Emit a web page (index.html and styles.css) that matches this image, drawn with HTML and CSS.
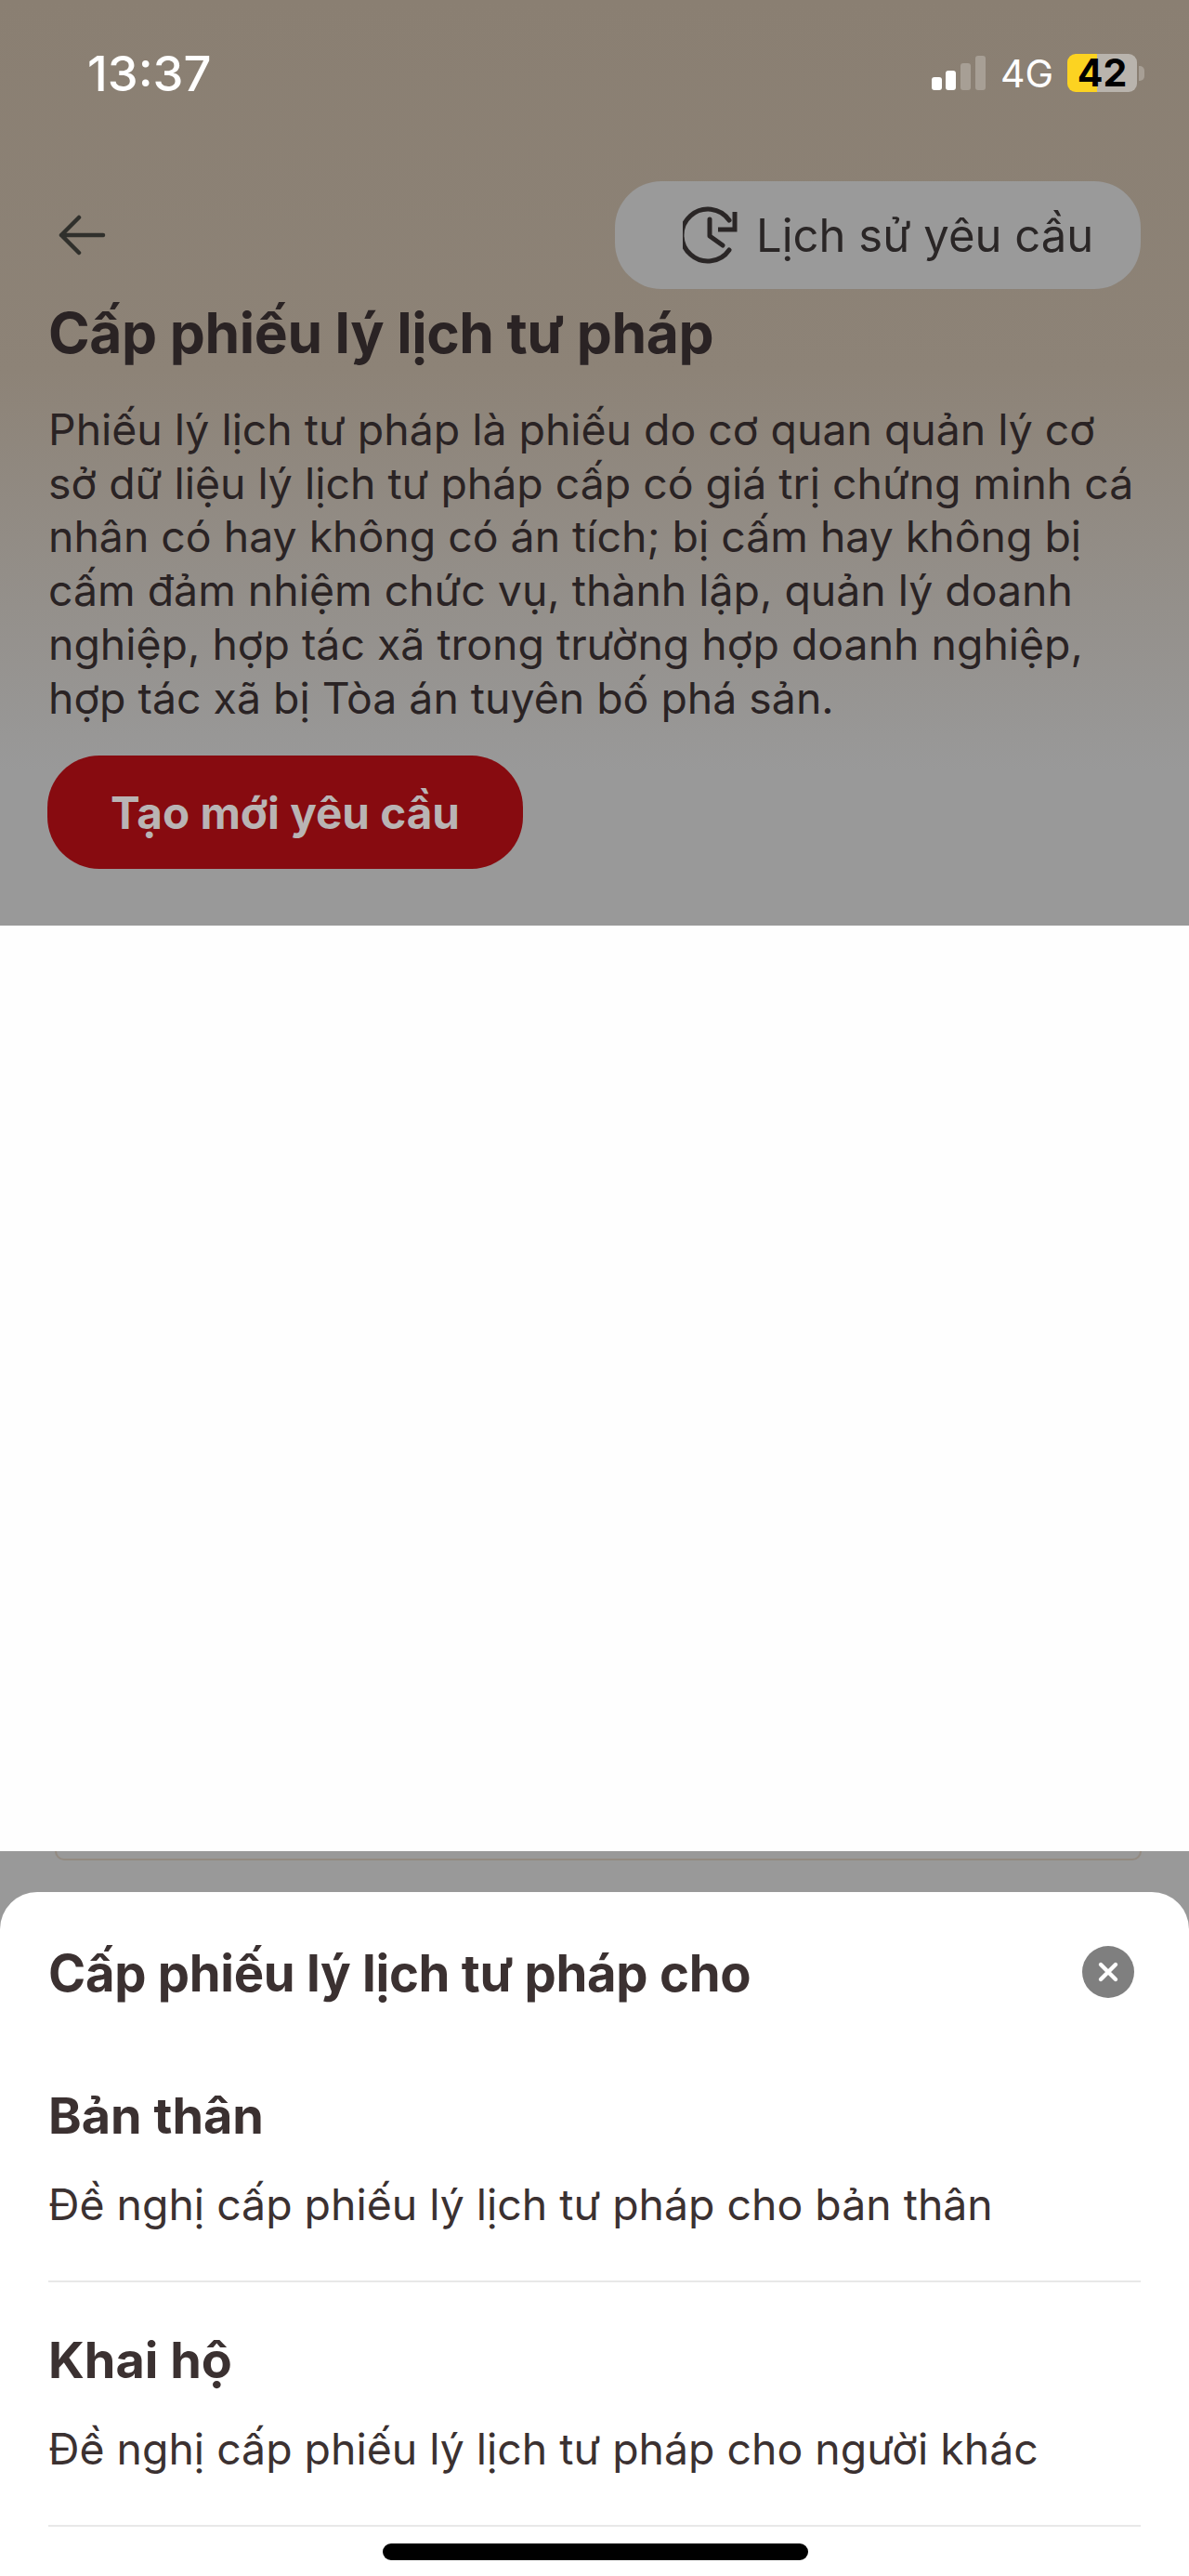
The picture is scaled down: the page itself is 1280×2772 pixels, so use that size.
FILE: index.html
```html
<!DOCTYPE html>
<html lang="vi">
<head>
<meta charset="utf-8">
<title>Cấp phiếu lý lịch tư pháp</title>
<link rel="stylesheet" href="styles.css">
</head>
<body>
<div class="screen">
  <section class="top">
    <div class="status">
      <span class="time">13:37</span>
      <div class="status-right">
        <svg class="signal" width="58" height="37" viewBox="0 0 58 37"><rect x="0" y="23" width="11" height="14" rx="3" fill="#fff"/><rect x="15" y="16" width="11" height="21" rx="3" fill="#fff"/><rect x="31" y="8" width="11" height="29" rx="3" fill="#a79f95"/><rect x="47" y="0" width="11" height="37" rx="3" fill="#a79f95"/></svg>
        <span class="net">4G</span>
        <div class="battery"><span class="battery-level">42</span></div>
        <span class="battery-cap"></span>
      </div>
    </div>
    <div class="nav">
      <svg class="back" width="52" height="44" viewBox="0 0 52 44"><path d="M48 22H3M22 3 3 22l19 19" fill="none" stroke="#30302c" stroke-width="4.5" stroke-linecap="round" stroke-linejoin="round"/></svg>
      <button class="history">
        <svg class="clock" width="64" height="62" viewBox="0 0 64 62"><path d="M50 47A28 28 0 1 1 50 15" fill="none" stroke="#2a2626" stroke-width="5" stroke-linecap="round"/><path d="M56 6v19H38" fill="none" stroke="#2a2626" stroke-width="5" stroke-linejoin="miter" stroke-linecap="butt"/><path d="M29 14v18l14 10" fill="none" stroke="#2a2626" stroke-width="5" stroke-linecap="round" stroke-linejoin="round"/></svg>
        <span>Lịch sử yêu cầu</span>
      </button>
    </div>
    <h1 class="title">Cấp phiếu lý lịch tư pháp</h1>
    <p class="desc">Phiếu lý lịch tư pháp là phiếu do cơ quan quản lý cơ<br>sở dữ liệu lý lịch tư pháp cấp có giá trị chứng minh cá<br>nhân có hay không có án tích; bị cấm hay không bị<br>cấm đảm nhiệm chức vụ, thành lập, quản lý doanh<br>nghiệp, hợp tác xã trong trường hợp doanh nghiệp,<br>hợp tác xã bị Tòa án tuyên bố phá sản.</p>
    <button class="create">Tạo mới yêu cầu</button>
  </section>
  <section class="blank"></section>
  <section class="under"><div class="under-card"></div></section>
  <section class="sheet">
    <header class="sheet-head">
      <h2 class="sheet-title">Cấp phiếu lý lịch tư pháp cho</h2>
      <span class="close"><svg width="24" height="24" viewBox="0 0 24 24"><path d="M4 4l16 16M20 4 4 20" stroke="#fff" stroke-width="4.4" stroke-linecap="round"/></svg></span>
    </header>
    <div class="option">
      <h3 class="option-title">Bản thân</h3>
      <p class="option-desc">Đề nghị cấp phiếu lý lịch tư pháp cho bản thân</p>
    </div>
    <div class="option">
      <h3 class="option-title">Khai hộ</h3>
      <p class="option-desc">Đề nghị cấp phiếu lý lịch tư pháp cho người khác</p>
    </div>
  </section>
  <div class="home-bar"></div>
</div>
</body>
</html>
```
FILE: styles.css
```css
* { box-sizing: border-box; }
html, body { margin: 0; padding: 0; }
body { font-family: Inter, "Liberation Sans", sans-serif; background: #fff; }
.screen { position: relative; width: 1280px; height: 2772px; overflow: hidden; background: #999; display: flex; flex-direction: column; }

.top { height: 996px; padding: 0 52px; background: linear-gradient(180deg, #8a7f72 0, #8d8377 400px, #999 830px, #999 100%); flex: none; }
.status { height: 156px; margin: 0 -4px 0 42px; padding-top: 50px; display: flex; justify-content: space-between; align-items: flex-start; }
.time { color: #fff; font-size: 52.5px; font-weight: 500; line-height: 58px; }
.status-right { display: flex; align-items: center; margin-top: 8px; }
.signal { margin-right: 16px; }
.net { color: #fff; font-size: 41px; font-weight: 400; line-height: 40px; margin-right: 15px; }
.battery { width: 75px; height: 41px; border-radius: 9px; background: linear-gradient(90deg, #fcd321 0, #fcd321 42%, #b9b4ad 42%); display: flex; align-items: center; justify-content: center; }
.battery-level { color: #000; font-size: 41px; font-weight: 700; line-height: 41px; }
.battery-cap { width: 6px; height: 16px; margin-left: 2px; border-radius: 0 5px 5px 0; background: #a79f95; }

.nav { height: 116px; margin-top: 39px; display: flex; justify-content: space-between; align-items: center; }
.back { margin-left: 11px; }
.history { width: 566px; height: 116px; border: 0; border-radius: 50px; background: #9a9a9a; display: flex; align-items: center; gap: 15px; padding: 0 0 0 73px; font: inherit; font-size: 49px; color: #2a2626; }
.title { margin: 13px 0 0; font-size: 60.5px; font-weight: 700; line-height: 68px; color: #2a2324; letter-spacing: -0.4px; }
.desc { margin: 42px 0 0; font-size: 46.4px; line-height: 57.7px; color: #2a2324; white-space: nowrap; }
.create { display: block; width: 512px; height: 122px; margin: 33px 0 0 -1px; border: 0; border-radius: 56px; background: #870b10; color: #b9b4b4; font: inherit; font-size: 47.6px; font-weight: 700; }

.blank { height: 996px; background: #fefefe; flex: none; }
.under { height: 44px; flex: none; background: #999; padding: 0 51px 0 59px; }
.under-card { height: 10px; border: 2px solid #938a80; border-top: 0; border-radius: 0 0 24px 24px; }

.sheet { flex: 1; background: #fff; border-radius: 40px 40px 0 0; padding: 0 52px; }
.sheet-head { height: 157px; padding-top: 56px; display: flex; justify-content: space-between; align-items: flex-start; }
.sheet-title { margin: 0; font-size: 54.4px; font-weight: 700; line-height: 62px; color: #3b3131; letter-spacing: -0.3px; }
.close { width: 56px; height: 56px; margin: 2px 7px 0 0; border-radius: 50%; background: #7f7f7f; display: flex; align-items: center; justify-content: center; }
.option { height: 263px; border-bottom: 2px solid #e8e8e8; padding-top: 53px; }
.option-title { margin: 0; font-size: 54px; font-weight: 700; line-height: 62px; color: #3b3131; }
.option-desc { margin: 37px 0 0; font-size: 46.4px; line-height: 54px; color: #3b3131; white-space: nowrap; }

.home-bar { position: absolute; left: 412px; bottom: 17px; width: 458px; height: 18px; border-radius: 9px; background: #000; }
```
